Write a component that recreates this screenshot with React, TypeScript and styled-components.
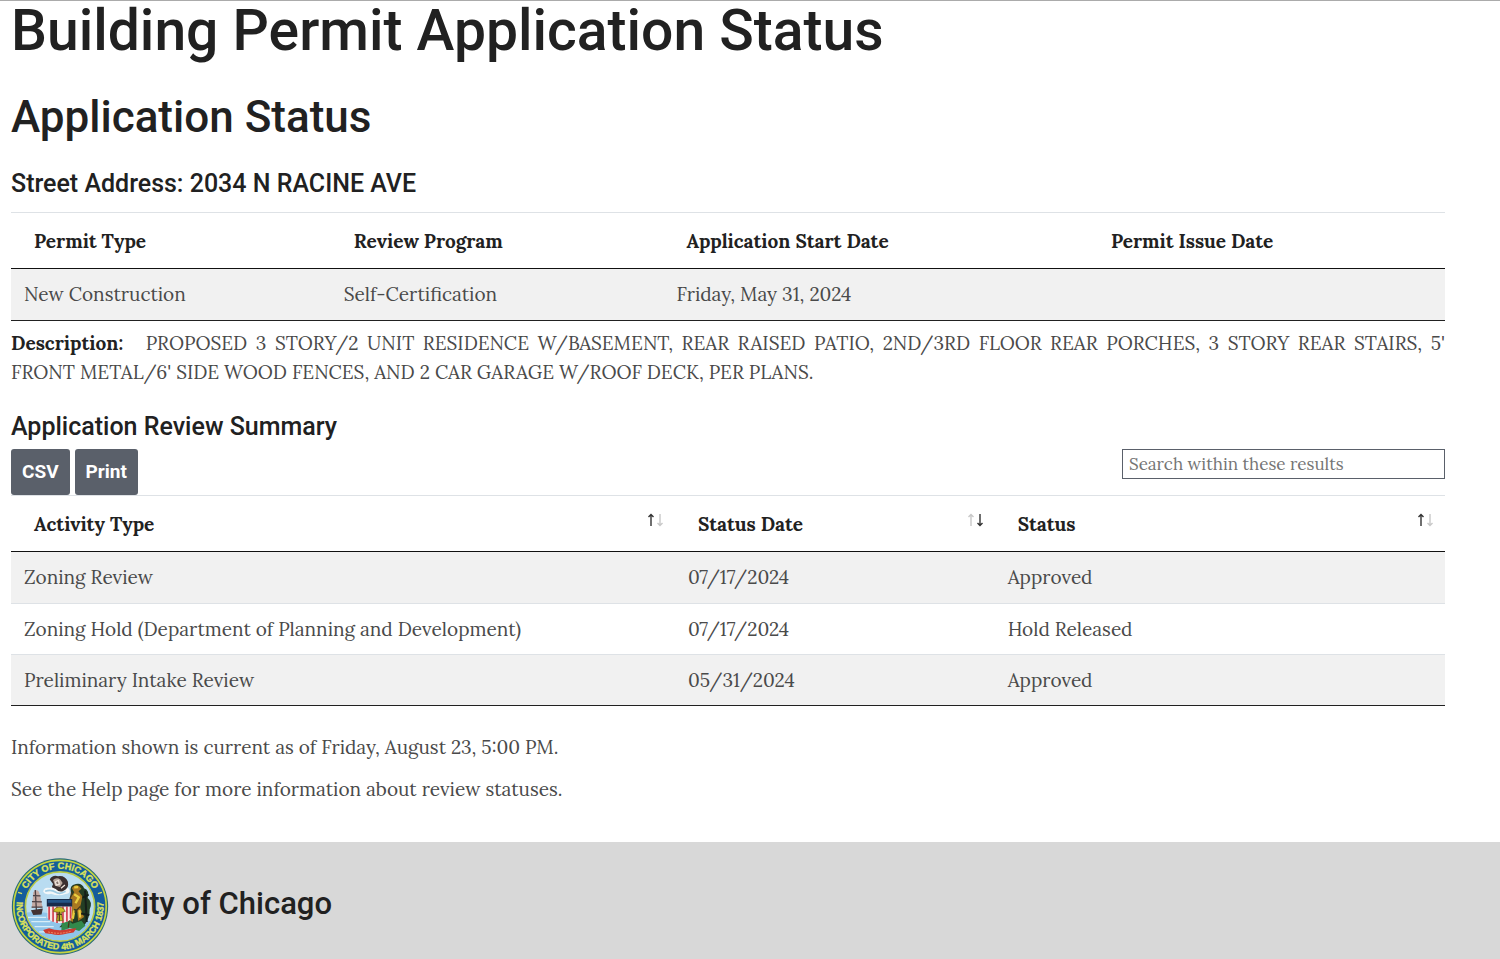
import React, { useState } from "react";
import styled, { createGlobalStyle } from "styled-components";

const serif = `Lora, "Liberation Serif", serif`;
const sans = `Roboto, "Liberation Sans", sans-serif`;

const GlobalStyle = createGlobalStyle`
  *, *::before, *::after { box-sizing: border-box; }
  body {
    margin: 0;
    background: #fff;
    color: #4a4a4a;
    font: 400 19px/29px ${serif};
  }
`;

const Page = styled.div`
  min-height: 100vh;
  display: flex;
  flex-direction: column;
  border-top: 1px solid #ababab;
`;

const Main = styled.main`
  flex: 1;
  padding: 0 55px 38px 11px;
`;

const Heading = styled.h1`
  margin: 0 0 30px;
  font: 500 57px/60px ${sans};
  color: #212121;
`;

const SubHeading = styled.h2`
  margin: 0 0 26px;
  font: 500 44px/52px ${sans};
  color: #212121;
`;

const SectionTitle = styled.h3<{ $gap: number }>`
  margin: 0 0 ${(p) => p.$gap}px;
  font: 500 25px/30px ${sans};
  color: #212121;
`;

const DataTable = styled.table`
  width: 100%;
  table-layout: fixed;
  border-collapse: separate;
  border-spacing: 0;
  border-top: 1px solid #dee2e6;
  border-bottom: 1px solid #212121;
`;

const Column = styled.col<{ $share?: string }>`
  width: ${(p) => p.$share ?? "auto"};
`;

const HeadCell = styled.th`
  height: 56px;
  padding: 1px 11px 0 23px;
  border-bottom: 1px solid #111;
  text-align: left;
  font-weight: 700;
  color: #212121;
`;

const BodyRow = styled.tr`
  &:nth-child(odd) {
    background: #f1f1f1;
  }
  &:not(:first-child) > td {
    border-top: 1px solid #dee2e6;
  }
`;

const Cell = styled.td`
  height: 51px;
  padding: 0 13px;
`;

const Description = styled.p`
  margin: 8px 0 25px;
  text-align: justify;

  strong {
    margin-right: 14px;
    color: #212121;
  }
`;

const Toolbar = styled.div`
  display: flex;
  justify-content: space-between;
  align-items: flex-start;
`;

const ButtonGroup = styled.div`
  display: flex;
  gap: 5px;
`;

const ToolButton = styled.button`
  height: 46px;
  padding: 0 11px;
  border: 0;
  border-radius: 3px;
  background: #5a606a;
  color: #fff;
  font: 700 19px/24px ${sans};
  cursor: pointer;
`;

const SearchInput = styled.input`
  width: 323px;
  height: 30px;
  padding: 0 6px;
  border: 1px solid #5a606a;
  background: #fff;
  color: #4a4a4a;
  font: 400 17px/26px ${serif};

  &::placeholder {
    color: #757575;
    opacity: 1;
  }
`;

const SortButton = styled.button`
  display: flex;
  justify-content: space-between;
  align-items: flex-start;
  width: 100%;
  padding: 0;
  border: 0;
  background: none;
  color: inherit;
  font: inherit;
  text-align: left;
  cursor: pointer;
`;

const Notes = styled.div`
  display: grid;
  gap: 13px;
  margin-top: 27px;

  p {
    margin: 0;
  }
`;

const Footer = styled.footer`
  display: flex;
  align-items: center;
  gap: 12px;
  padding: 16px 11px 4px;
  background: #d8d8d8;
`;

const FooterName = styled.span`
  margin-bottom: 6px;
  font: 500 31px/40px ${sans};
  color: #212121;
`;

const SealSvg = styled.svg`
  width: 98px;
  height: 97px;
  flex: none;
`;

type Direction = "asc" | "desc";

function SortArrows({ active }: { active: Direction }) {
  const on = "#333";
  const off = "#c8c8c8";
  return (
    <svg width="18" height="20" viewBox="0 0 18 20" fill="none" aria-hidden="true">
      <path d="M5 16V5M2.5 7L5 4.500L7.500 7" stroke={active === "asc" ? on : off} strokeWidth="1.4" />
      <path d="M14 4V15M11.500 13L14 15.500L16.500 13" stroke={active === "desc" ? on : off} strokeWidth="1.4" />
    </svg>
  );
}

function Seal() {
  return (
    <SealSvg viewBox="0 0 294 294" role="img" aria-label="City of Chicago seal">
      <defs>
        <path id="seal-top" d="M33 147A114 114 0 0 1 261 147" />
        <path id="seal-bottom" d="M17.500 120A132 132 0 1 0 276.500 120" />
        <clipPath id="seal-scene">
          <circle cx="147" cy="147" r="103" />
        </clipPath>
      </defs>
      <circle cx="147" cy="147" r="146" fill="#286b78" />
      <circle cx="147" cy="147" r="140" fill="#155d9b" stroke="#c6d53f" strokeWidth="5" />
      <circle cx="147" cy="147" r="105" fill="#b9dcf1" stroke="#b8c945" strokeWidth="5" />
      <g clipPath="url(#seal-scene)">
        <path d="M40 166Q90 158 150 176T250 190V250H40Z" fill="#8fc5ea" />
        <path d="M48 180H105M60 193H118M70 208H128M84 224H140" stroke="#d7edf8" strokeWidth="4" />
        <path d="M96 102Q98 86 118 91Q127 78 145 87Q165 82 174 93Q181 108 164 109Q142 117 120 108Q101 113 96 102Z" fill="#f3f7f9" />
        <path d="M102 101Q120 94 133 103T164 101" stroke="#9fcbe3" strokeWidth="5" fill="none" />
        <path d="M116 65Q123 51 141 55Q163 52 171 72Q175 93 158 99Q146 106 134 94L122 89L126 79Z" fill="#3c3031" />
        <path d="M126 67Q136 57 148 65L155 76L147 88L132 84Z" fill="#b9a69c" />
        <path d="M133 72L142 68L145 79L136 82ZM150 92L162 82" stroke="#eee2da" strokeWidth="4" fill="#85736c" />
        <path d="M66 104Q75 93 83 102L88 119L94 149L61 151L64 127Z" fill="#c5aaa4" />
        <path d="M72 97L76 168M65 114L88 115M62 132L92 133M61 149L94 149" stroke="#4c4145" strokeWidth="4" />
        <path d="M59 158L95 153L91 171L66 173Z" fill="#433434" />
        <path d="M180 105Q174 83 195 79Q214 75 220 92Q237 98 231 121Q247 134 237 155Q238 184 217 208L145 210Q160 190 185 191Z" fill="#243e24" />
        <path d="M152 195L173 190L185 199L212 190L224 205L205 221L177 212L151 221Z" fill="#32894b" />
        <path d="M183 91Q198 72 212 93L203 101L215 116L208 151L220 179L202 191L199 157L190 154L186 194L176 189L183 155L179 121L190 104Z" fill="#a87821" />
        <path d="M190 89L202 88M190 110L204 119L194 137M190 159L186 184M206 158L208 181" stroke="#e9ce3e" strokeWidth="7" fill="none" />
        <path d="M223 99L228 194M215 120L234 111M211 168L236 173" stroke="#151e19" strokeWidth="6" />
        <path d="M178 167L172 211M183 103L170 153M210 145L191 165" stroke="#48391d" strokeWidth="4" />
        <path d="M109 145H182V181Q178 194 147 198Q116 194 109 181Z" fill="#f7e9e7" />
        <path d="M114 147V187M126 147V193M138 147V197M156 147V197M168 147V193M179 147V184" stroke="#d33c4b" strokeWidth="5" />
        <path d="M107 124H184V147H107Z" fill="#172b4b" />
        <path d="M110 127H181V136H110Z" fill="#245587" />
        <path d="M131 154Q145 143 158 154L163 162L150 165L156 190H137L142 165L127 162Z" fill="#c9bd25" stroke="#645618" strokeWidth="2" />
        <path d="M145 163V192M137 171H153" stroke="#52441d" strokeWidth="4" />
        <path d="M96 218L114 213Q143 224 174 215L197 213L188 226L169 229Q144 237 121 230L103 228Z" fill="#cf3a30" />
        <path d="M111 224Q144 233 180 222" stroke="#ed8c63" strokeWidth="3" strokeDasharray="6 3" fill="none" />
      </g>
      <g fill="#dbe25c" stroke="#dbe25c" strokeWidth="1" fontFamily="Liberation Sans, sans-serif" fontWeight="700" fontSize="28">
        <text textAnchor="middle">
          <textPath href="#seal-top" startOffset="50%">CITY OF CHICAGO</textPath>
        </text>
        <text textAnchor="middle" fontSize="27">
          <textPath href="#seal-bottom" startOffset="50%">INCORPORATED 4th MARCH 1837</textPath>
        </text>
      </g>
      <path d="M20 104L32 108M262 108L274 104" stroke="#dbe25c" strokeWidth="4" />
    </SealSvg>
  );
}

const activities = [
  { type: "Zoning Review", date: "07/17/2024", status: "Approved" },
  { type: "Zoning Hold (Department of Planning and Development)", date: "07/17/2024", status: "Hold Released" },
  { type: "Preliminary Intake Review", date: "05/31/2024", status: "Approved" },
];

const activityColumns: { label: string; share?: string; sort: Direction }[] = [
  { label: "Activity Type", share: "46.3%", sort: "asc" },
  { label: "Status Date", share: "22.3%", sort: "desc" },
  { label: "Status", sort: "asc" },
];

export default function App() {
  const [query, setQuery] = useState("");
  const rows = activities.filter((a) =>
    `${a.type} ${a.date} ${a.status}`.toLowerCase().includes(query.toLowerCase())
  );

  return (
    <>
      <GlobalStyle />
      <Page>
        <Main>
          <Heading>Building Permit Application Status</Heading>
          <SubHeading>Application Status</SubHeading>
          <SectionTitle $gap={13}>Street Address: 2034 N RACINE AVE</SectionTitle>
          <DataTable>
            <colgroup>
              <Column $share="22.3%" />
              <Column $share="23.2%" />
              <Column $share="29.6%" />
              <Column />
            </colgroup>
            <thead>
              <tr>
                <HeadCell scope="col">Permit Type</HeadCell>
                <HeadCell scope="col">Review Program</HeadCell>
                <HeadCell scope="col">Application Start Date</HeadCell>
                <HeadCell scope="col">Permit Issue Date</HeadCell>
              </tr>
            </thead>
            <tbody>
              <BodyRow>
                <Cell>New Construction</Cell>
                <Cell>Self-Certification</Cell>
                <Cell>Friday, May 31, 2024</Cell>
                <Cell />
              </BodyRow>
            </tbody>
          </DataTable>
          <Description>
            <strong>Description:</strong> PROPOSED 3 STORY/2 UNIT RESIDENCE W/BASEMENT, REAR RAISED PATIO, 2ND/3RD
            FLOOR REAR PORCHES, 3 STORY REAR STAIRS, 5' FRONT METAL/6' SIDE WOOD FENCES, AND 2 CAR GARAGE W/ROOF
            DECK, PER PLANS.
          </Description>
          <SectionTitle $gap={7}>Application Review Summary</SectionTitle>
          <Toolbar>
            <ButtonGroup>
              <ToolButton type="button">CSV</ToolButton>
              <ToolButton type="button">Print</ToolButton>
            </ButtonGroup>
            <SearchInput
              type="search"
              aria-label="Search within these results"
              placeholder="Search within these results"
              value={query}
              onChange={(e) => setQuery(e.target.value)}
            />
          </Toolbar>
          <DataTable>
            <colgroup>
              {activityColumns.map((c) => (
                <Column key={c.label} $share={c.share} />
              ))}
            </colgroup>
            <thead>
              <tr>
                {activityColumns.map((c) => (
                  <HeadCell key={c.label} scope="col">
                    <SortButton type="button">
                      {c.label}
                      <SortArrows active={c.sort} />
                    </SortButton>
                  </HeadCell>
                ))}
              </tr>
            </thead>
            <tbody>
              {rows.map((a) => (
                <BodyRow key={a.type}>
                  <Cell>{a.type}</Cell>
                  <Cell>{a.date}</Cell>
                  <Cell>{a.status}</Cell>
                </BodyRow>
              ))}
            </tbody>
          </DataTable>
          <Notes>
            <p>Information shown is current as of Friday, August 23, 5:00 PM.</p>
            <p>See the Help page for more information about review statuses.</p>
          </Notes>
        </Main>
        <Footer>
          <Seal />
          <FooterName>City of Chicago</FooterName>
        </Footer>
      </Page>
    </>
  );
}
